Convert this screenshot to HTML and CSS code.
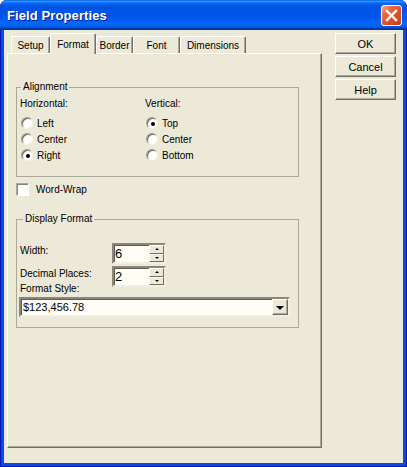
FILE: index.html
```html
<!DOCTYPE html>
<html>
<head>
<meta charset="utf-8">
<link rel="stylesheet" href="styles.css">
</head>
<body>
<div class="window">
  <div class="titlebar">
    <span class="title">Field Properties</span>
    <span class="close"><svg width="13" height="13" viewBox="0 0 13 13"><path d="M2 2 L11 11 M11 2 L2 11" stroke="#fff" stroke-width="2.4" stroke-linecap="square"/></svg></span>
  </div>
  <div class="client">
    <div class="sheet">
      <div class="tabs">
        <div class="tab t-setup">Setup</div>
        <div class="tab sel t-format">Format</div>
        <div class="tab t-border">Border</div>
        <div class="tab t-font">Font</div>
        <div class="tab t-dim">Dimensions</div>
      </div>
      <div class="panel">
        <fieldset class="group g-align">
          <legend>Alignment</legend>
          <div class="cols">
            <div class="col">
              <div class="cap">Horizontal:</div>
              <div class="radio"><span class="rb"></span>Left</div>
              <div class="radio"><span class="rb"></span>Center</div>
              <div class="radio"><span class="rb on"></span>Right</div>
            </div>
            <div class="col">
              <div class="cap">Vertical:</div>
              <div class="radio"><span class="rb on"></span>Top</div>
              <div class="radio"><span class="rb"></span>Center</div>
              <div class="radio"><span class="rb"></span>Bottom</div>
            </div>
          </div>
        </fieldset>
        <div class="check"><span class="cb"></span>Word-Wrap</div>
        <fieldset class="group g-disp">
          <legend>Display Format</legend>
          <div class="field">
            <span class="flabel">Width:</span>
            <div class="spin"><span class="val">6</span><span class="arrows"><span class="sbtn"><i class="up"></i></span><span class="sbtn"><i class="dn"></i></span></span></div>
          </div>
          <div class="field">
            <span class="flabel">Decimal Places:</span>
            <div class="spin"><span class="val">2</span><span class="arrows"><span class="sbtn"><i class="up"></i></span><span class="sbtn"><i class="dn"></i></span></span></div>
          </div>
          <div class="cap fs">Format Style:</div>
          <div class="combo"><span class="ctext">$123,456.78</span><span class="dd"><i class="tri"></i></span></div>
        </fieldset>
      </div>
    </div>
    <div class="buttons">
      <div class="btn">OK</div>
      <div class="btn">Cancel</div>
      <div class="btn">Help</div>
    </div>
  </div>
</div>
</body>
</html>
```
FILE: styles.css
```css
html, body {
  margin: 0;
  padding: 0;
  background: #ffffff;
}
body {
  font-family: "Liberation Sans", Arial, sans-serif;
  font-size: 10px;
  color: #000;
}
.window {
  width: 407px;
  height: 467px;
  display: flex;
  flex-direction: column;
  background: #0a48e8;
  border-radius: 7px 7px 0 0;
  overflow: hidden;
  box-shadow: inset 1px 0 #0019b0, inset -1px 0 #0019b0, inset 0 -1px #0019b0;
}
.titlebar {
  flex: none;
  height: 30px;
  box-sizing: border-box;
  display: flex;
  align-items: center;
  padding: 0 5px 0 7px;
  border-radius: 7px 7px 0 0;
  background: linear-gradient(to bottom, #0058ee 0%, #3a93ff 4%, #288eff 6%, #127dff 8%, #036ffc 10%, #0262ee 14%, #0057e5 20%, #0054e3 24%, #0055eb 56%, #005bf5 66%, #026afe 76%, #0062ef 86%, #0052d6 92%, #0040ab 94%, #003092 100%);
}
.title {
  flex: 1;
  color: #fff;
  font-weight: bold;
  font-size: 13px;
  margin-top: 1px;
  text-shadow: 1px 1px 0 #0c1f8a;
  letter-spacing: 0.1px;
}
.close {
  width: 21px;
  height: 21px;
  box-sizing: border-box;
  border: 1px solid #fff;
  border-radius: 3px;
  background: linear-gradient(135deg, #f2a88c 0%, #e66c45 28%, #d9502c 60%, #c33d1c 100%);
  display: flex;
  align-items: center;
  justify-content: center;
  margin-top: 1px;
}
.client {
  flex: 1;
  margin: 0 4px 4px 4px;
  background: #ece9d8;
  display: flex;
  padding: 3px 0 0 3px;
}
.sheet {
  width: 315px;
  display: flex;
  flex-direction: column;
}
.tabs {
  height: 20px;
  display: flex;
  align-items: flex-end;
  padding-left: 4px;
  position: relative;
  z-index: 1;
}
.tab {
  height: 17px;
  box-sizing: border-box;
  border: 1px solid #fff;
  border-bottom: none;
  border-right-color: #716f64;
  box-shadow: inset -1px 0 #aca899;
  border-radius: 2px 2px 0 0;
  display: flex;
  align-items: center;
  justify-content: center;
  background: #ece9d8;
}
.tab.sel {
  height: 21px;
  margin-bottom: -1px;
}
.t-setup { width: 39px; }
.t-format { width: 46px; }
.t-border { width: 37px; }
.t-font { width: 47px; }
.t-dim { width: 66px; }
.panel {
  height: 395px;
  box-sizing: border-box;
  border: 1px solid;
  border-color: #fff #716f64 #716f64 #fff;
  box-shadow: inset -1px -1px #aca899;
  padding: 27px 0 0 8px;
}
.group {
  margin: 0;
  width: 283px;
  box-sizing: border-box;
  border: 1px solid #aca899;
  padding: 0 3px;
  min-width: 0;
}
.group legend {
  padding: 0 2px;
  line-height: 12px;
  font-size: 10px;
}
.g-align legend { margin-left: 1px; }
.g-disp legend { margin-left: 3px; }
.g-align {
  padding-top: 5px;
  padding-bottom: 13px;
}
.cols {
  display: flex;
}
.col {
  width: 125px;
  display: flex;
  flex-direction: column;
}
.cap {
  line-height: 12px;
  height: 12px;
  margin-bottom: 5px;
}
.radio {
  height: 16px;
  display: flex;
  align-items: center;
}
.rb {
  width: 12px;
  height: 12px;
  box-sizing: border-box;
  border-radius: 50%;
  background: #fff;
  border: 1px solid;
  border-color: #a09c8c #f4f2e8 #f4f2e8 #a09c8c;
  box-shadow: inset 1px 1px #6a675c;
  margin: 0 4px 0 1px;
  display: flex;
  align-items: center;
  justify-content: center;
}
.rb.on::after {
  content: "";
  width: 4px;
  height: 4px;
  border-radius: 50%;
  background: #000;
  margin: 1px 0 0 1px;
}
.check {
  margin-top: 6px;
  height: 13px;
  display: flex;
  align-items: center;
}
.cb {
  width: 13px;
  height: 13px;
  box-sizing: border-box;
  background: #fff;
  border: 1px solid;
  border-color: #aca899 #fff #fff #aca899;
  box-shadow: inset 1px 1px #8a8778;
  margin-right: 7px;
}
.g-disp {
  margin-top: 17px;
  padding-top: 18px;
  padding-bottom: 10px;
}
.field {
  height: 21px;
  display: flex;
  align-items: flex-start;
  margin-bottom: 2px;
}
.flabel {
  width: 92px;
  padding-top: 2px;
  line-height: 12px;
}
.spin {
  width: 54px;
  height: 21px;
  box-sizing: border-box;
  border: 2px solid;
  border-color: #8a8778 #f1efe2 #f1efe2 #8a8778;
  box-shadow: inset 1px 1px #605d52;
  background: #fefef6;
  display: flex;
}
.val {
  flex: 1;
  font-size: 13px;
  line-height: 17px;
  padding-left: 1px;
}
.arrows {
  width: 15px;
  display: flex;
  flex-direction: column;
}
.sbtn {
  flex: 1;
  box-sizing: border-box;
  background: #ece9d8;
  border: 1px solid;
  border-color: #fff #716f64 #716f64 #fff;
  display: flex;
  align-items: center;
  justify-content: center;
}
.up {
  width: 0;
  height: 0;
  border-left: 2px solid transparent;
  border-right: 2px solid transparent;
  border-bottom: 2px solid #000;
}
.dn {
  width: 0;
  height: 0;
  border-left: 2px solid transparent;
  border-right: 2px solid transparent;
  border-top: 2px solid #000;
}
.cap.fs {
  margin-top: -6px;
  margin-bottom: 2px;
}
.combo {
  width: 271px;
  height: 20px;
  margin-left: -1px;
  box-sizing: border-box;
  border: 2px solid;
  border-color: #8a8778 #f1efe2 #f1efe2 #8a8778;
  box-shadow: inset 1px 1px #605d52;
  background: #fefef6;
  display: flex;
  align-items: center;
}
.ctext {
  flex: 1;
  font-size: 11px;
  padding-left: 2px;
}
.dd {
  width: 16px;
  height: 16px;
  box-sizing: border-box;
  background: #ece9d8;
  border: 1px solid;
  border-color: #fff #716f64 #716f64 #fff;
  box-shadow: inset -1px -1px #aca899;
  display: flex;
  align-items: center;
  justify-content: center;
}
.tri {
  width: 0;
  height: 0;
  border-left: 4px solid transparent;
  border-right: 4px solid transparent;
  border-top: 4px solid #000;
  margin-top: 1px;
}
.buttons {
  margin-left: 13px;
  display: flex;
  flex-direction: column;
  gap: 2px;
}
.btn {
  width: 61px;
  height: 21px;
  box-sizing: border-box;
  border: 1px solid;
  border-color: #fff #716f64 #716f64 #fff;
  box-shadow: inset -1px -1px #aca899;
  display: flex;
  align-items: center;
  justify-content: center;
  font-size: 11px;
}
```
